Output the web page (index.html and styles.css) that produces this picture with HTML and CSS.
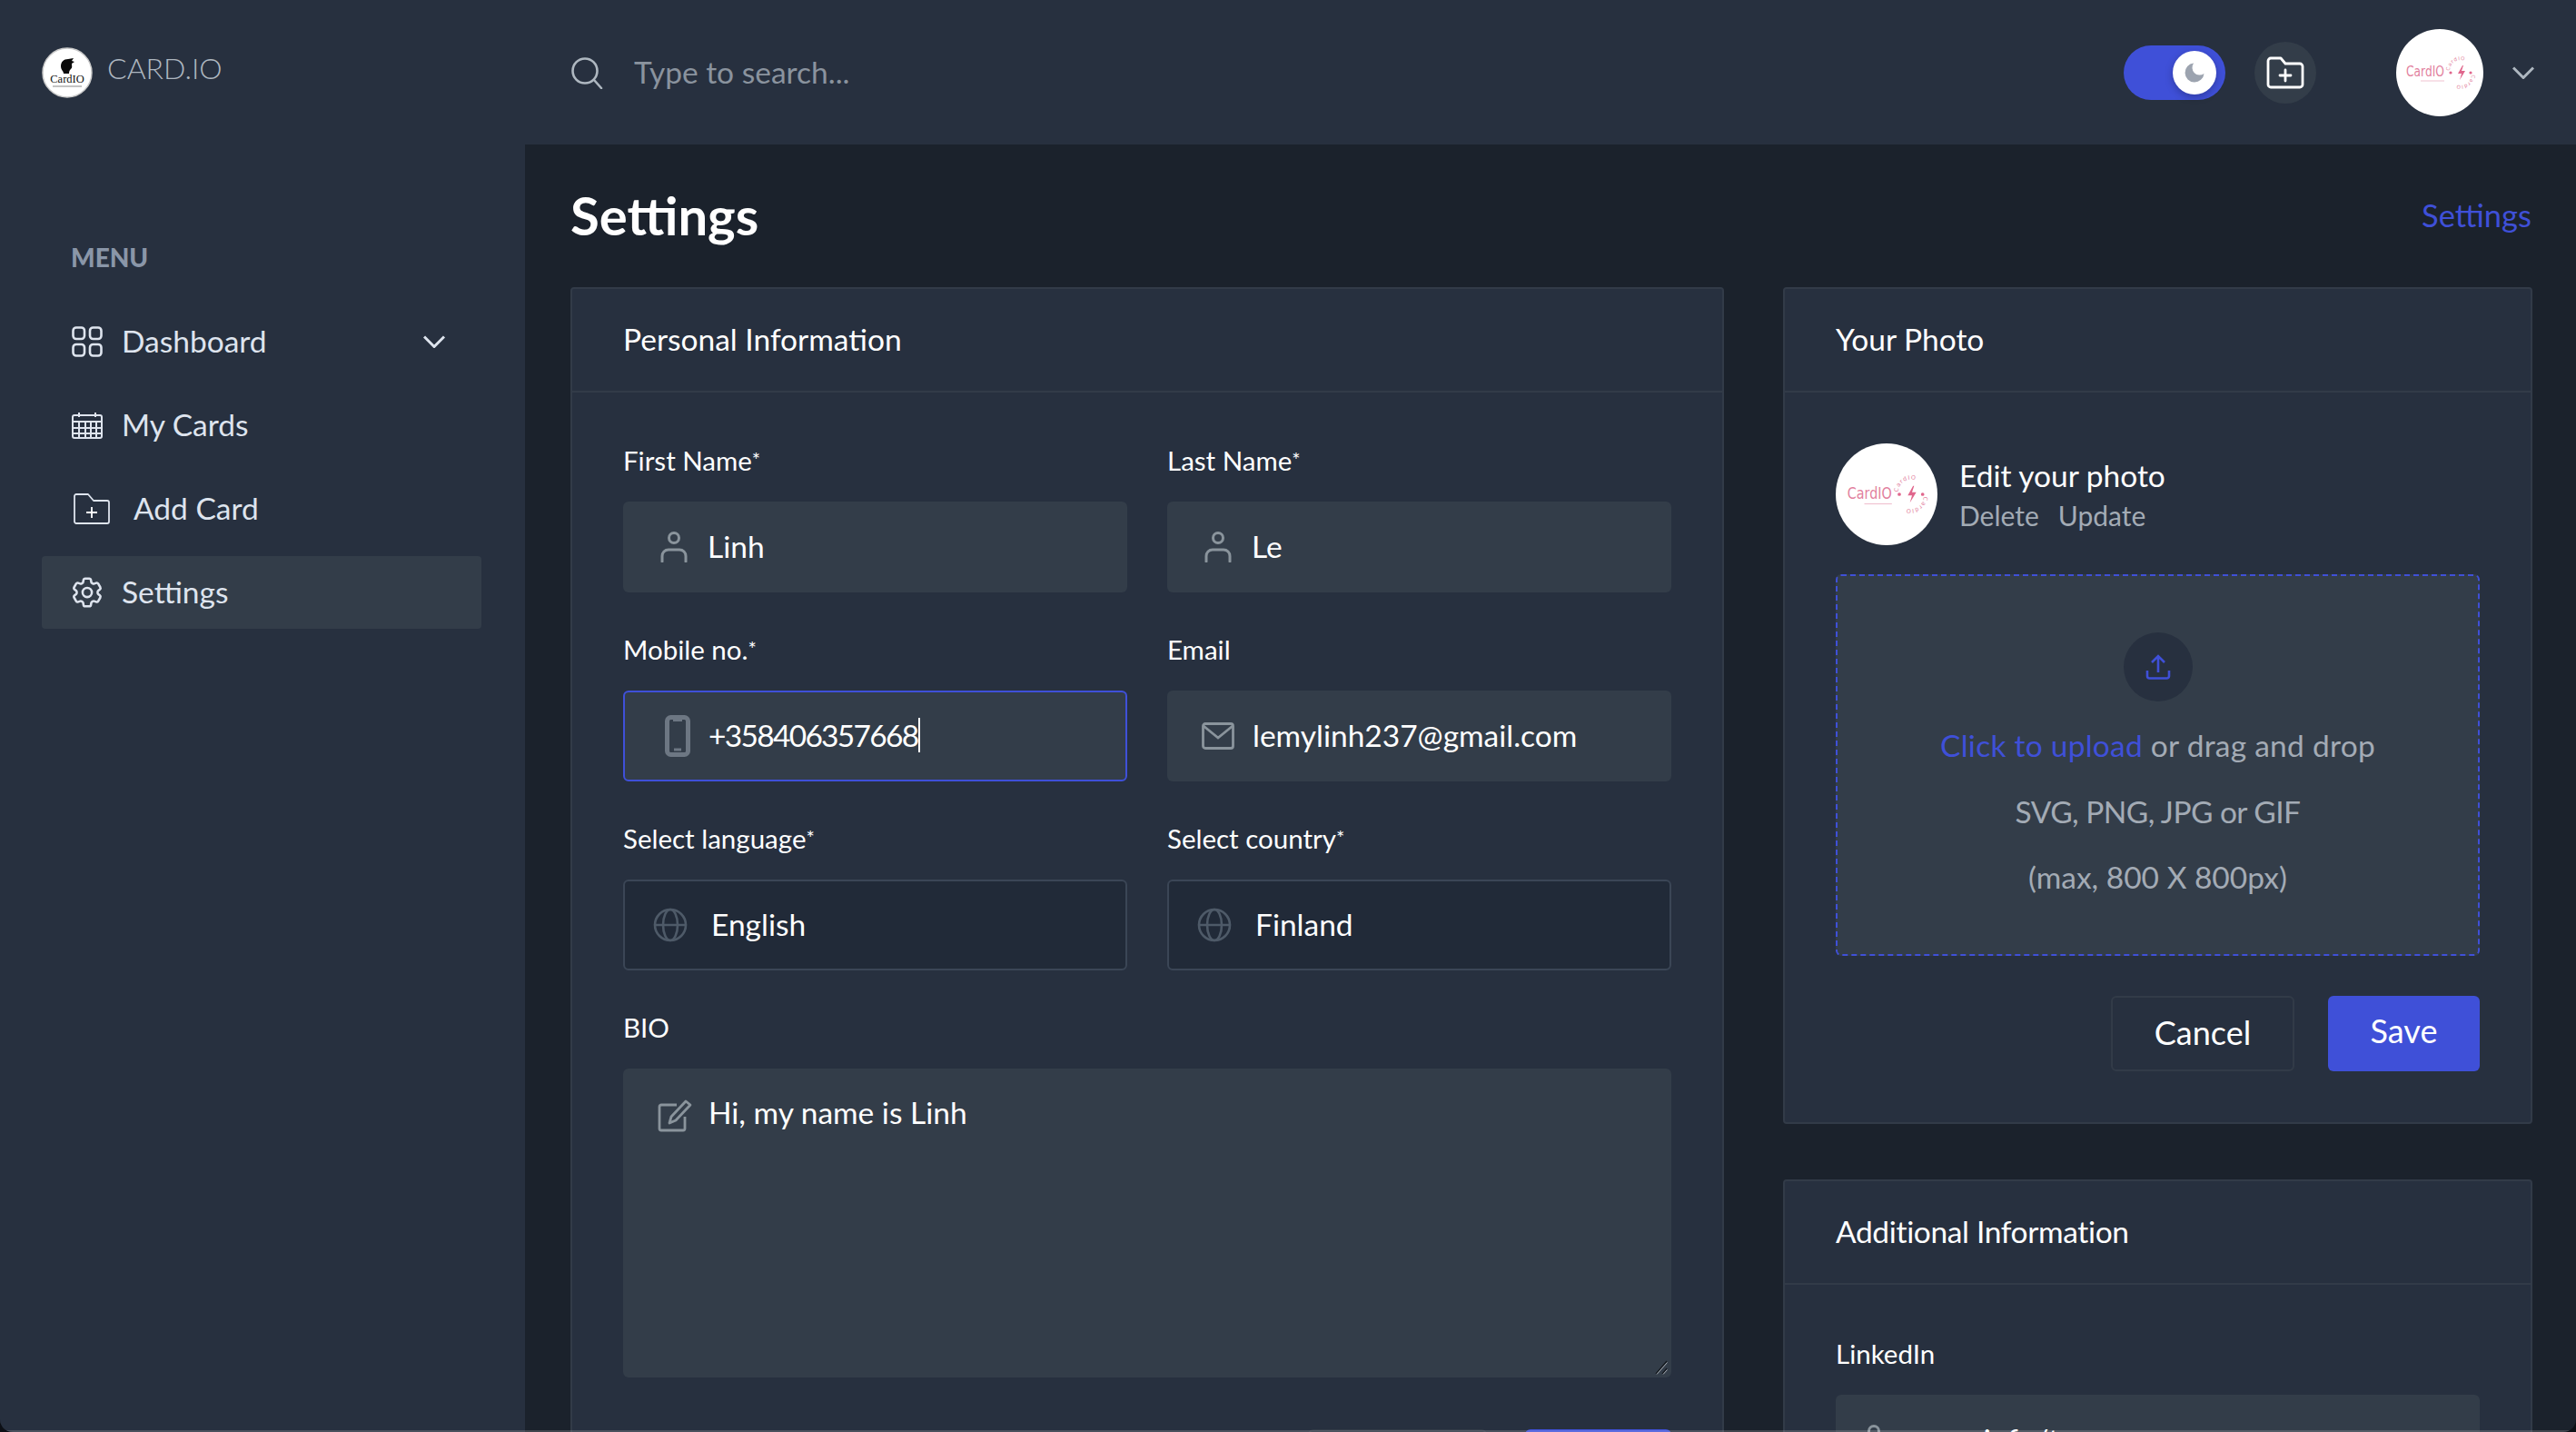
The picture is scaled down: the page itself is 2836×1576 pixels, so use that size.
FILE: index.html
```html
<!DOCTYPE html>
<html>
<head>
  <meta charset="utf-8">
  <title>Settings - Card.io</title>
  <link rel="stylesheet" href="styles.css">
</head>
<body>
<svg class="defs" xmlns="http://www.w3.org/2000/svg">
  <symbol id="i-user" viewBox="0 0 30 34">
    <circle cx="15" cy="7" r="5.5" fill="none" stroke="currentColor" stroke-width="3"/>
    <path d="M2 33v-6c0-4 3-7 7-7h12c4 0 7 3 7 7v6" fill="none" stroke="currentColor" stroke-width="3" stroke-linecap="round"/>
  </symbol>
  <symbol id="i-globe" viewBox="0 0 38 38">
    <g fill="none" stroke="currentColor" stroke-width="2.6">
      <circle cx="19" cy="19" r="17"/>
      <ellipse cx="19" cy="19" rx="8" ry="17"/>
      <path d="M2 19h34"/>
    </g>
  </symbol>
</svg>

<div class="app">
  <header class="topbar">
    <div class="brand">
      <svg class="brand-logo" viewBox="0 0 56 56">
        <circle cx="28" cy="28" r="27" fill="#fff" stroke="#c9c9c9" stroke-width="1.500"/>
        <path d="M21 21c0-5 3-8 8-8l6-1-2 3 3 1-3 2c0 3 1 4-1 6-1 1-2 2-2 5h-6c0-3-3-4-3-8z" fill="#0b0b0b"/>
        <text x="28" y="39" text-anchor="middle" font-family="Liberation Serif" font-size="12.500" fill="#111">CardIO</text>
        <path d="M12 43h32" stroke="#888" stroke-width="1"/>
      </svg>
      <span class="brand-name">CARD.IO</span>
    </div>
    <div class="search">
      <svg width="36" height="36" viewBox="0 0 36 36" fill="none" stroke="#aeb7c0" stroke-width="2.6" stroke-linecap="round"><circle cx="16" cy="16" r="13.5"/><path d="M26 26l8 9"/></svg>
      <span>Type to search...</span>
    </div>
    <div class="top-actions">
      <div class="toggle">
        <div class="toggle-knob">
          <svg width="28" height="28" viewBox="0 0 24 24"><path d="M21 12.79A9 9 0 1 1 11.21 3 7 7 0 0 0 21 12.79z" fill="#9ca3af"/></svg>
        </div>
      </div>
      <div class="add-btn">
        <svg width="42" height="36" viewBox="0 0 42 36" fill="none" stroke="#fff" stroke-width="2.8" stroke-linecap="round" stroke-linejoin="round"><path d="M2 5a3 3 0 0 1 3-3h11l5 6h16a3 3 0 0 1 3 3v20a3 3 0 0 1-3 3H5a3 3 0 0 1-3-3z"/><path d="M21 15v12M15 21h12"/></svg>
      </div>
      <svg class="top-avatar" viewBox="0 0 96 96">
        <circle cx="48" cy="48" r="48" fill="#fff"/>
        <path id="ring-a1" d="M59 46a12 12 0 0 1 24 0" fill="none"/>
        <path id="ring-a2" d="M83 50a12 12 0 0 1-24 0" fill="none"/>
        <text x="11" y="52" font-family="DejaVu Sans" font-size="15" fill="#e27f9e" textLength="42" lengthAdjust="spacingAndGlyphs">CardIO</text>
        <text class="ring-text" font-family="DejaVu Sans" font-size="5.500" fill="#e27f9e"><textPath href="#ring-a1">CardIO</textPath></text>
        <text class="ring-text" font-family="DejaVu Sans" font-size="5.500" fill="#e27f9e"><textPath href="#ring-a2">CardIO</textPath></text>
        <path d="M73 40l-5 9h4l-2 7 6-10h-4l2-6z" fill="#e0668c"/>
        <circle cx="60" cy="48" r="1.600" fill="#e0668c"/>
        <circle cx="82" cy="48" r="1.600" fill="#e0668c"/>
        <path d="M27 57h26" stroke="#f0c2d1" stroke-width="1"/>
      </svg>
      <svg width="24" height="14" viewBox="0 0 24 14" fill="none" stroke="#aeb7c0" stroke-width="3"><path d="M1 1.5l11 11 11-11"/></svg>
    </div>
  </header>

  <aside class="sidebar">
    <h3 class="menu-title">MENU</h3>
    <nav class="menu">
      <a class="menu-item">
        <svg width="34" height="34" viewBox="0 0 34 34" fill="none" stroke="currentColor" stroke-width="2.6"><rect x="1.5" y="1.5" width="12.5" height="12.5" rx="3.5"/><rect x="20" y="1.5" width="12.5" height="12.5" rx="3.5"/><rect x="1.5" y="20" width="12.5" height="12.5" rx="3.5"/><rect x="20" y="20" width="12.5" height="12.5" rx="3.5"/></svg>
        <span>Dashboard</span>
        <svg class="menu-arrow" width="24" height="14" viewBox="0 0 24 14" fill="none" stroke="currentColor" stroke-width="3"><path d="M1 1.5l11 11 11-11"/></svg>
      </a>
      <a class="menu-item">
        <svg width="34" height="30" viewBox="0 0 34 30" fill="none" stroke="currentColor" stroke-width="2"><rect x="1" y="4" width="32" height="25" rx="2"/><path d="M1 11h32M1 18h32M1 24h32M8 11v18M15 11v18M21 11v18M27 11v18M8 1v5M26 1v5"/></svg>
        <span>My Cards</span>
      </a>
      <a class="menu-item menu-item-add">
        <svg width="40" height="34" viewBox="0 0 40 34" fill="none" stroke="currentColor" stroke-width="1.8" stroke-linejoin="round"><path d="M1 3a2 2 0 0 1 2-2h13l6 7h15a2 2 0 0 1 2 2v21a2 2 0 0 1-2 2H3a2 2 0 0 1-2-2z"/><path d="M20 15v12M14 21h12" stroke="#fff"/></svg>
        <span>Add Card</span>
      </a>
      <a class="menu-item active">
        <svg width="34" height="34" viewBox="2 2 20 20" fill="none" stroke="currentColor" stroke-width="1.5"><path d="M9.594 3.94c.09-.542.56-.94 1.11-.94h2.593c.55 0 1.02.398 1.11.94l.213 1.281c.063.374.313.686.645.87.074.04.147.083.22.127.325.196.72.257 1.075.124l1.217-.456a1.125 1.125 0 0 1 1.37.49l1.296 2.247a1.125 1.125 0 0 1-.26 1.431l-1.003.827c-.293.241-.438.613-.43.992a7.723 7.723 0 0 1 0 .255c-.008.378.137.75.43.991l1.004.827c.424.35.534.955.26 1.43l-1.298 2.247a1.125 1.125 0 0 1-1.369.491l-1.217-.456c-.355-.133-.75-.072-1.076.124a6.47 6.47 0 0 1-.22.128c-.331.183-.581.495-.644.869l-.213 1.281c-.09.543-.56.94-1.11.94h-2.594c-.55 0-1.019-.398-1.11-.94l-.213-1.281c-.062-.374-.312-.686-.644-.87a6.52 6.52 0 0 1-.22-.127c-.325-.196-.72-.257-1.076-.124l-1.217.456a1.125 1.125 0 0 1-1.369-.49l-1.297-2.247a1.125 1.125 0 0 1 .26-1.431l1.004-.827c.292-.24.437-.613.43-.991a6.932 6.932 0 0 1 0-.255c.007-.38-.138-.751-.43-.992l-1.004-.827a1.125 1.125 0 0 1-.26-1.43l1.297-2.247a1.125 1.125 0 0 1 1.37-.491l1.216.456c.356.133.751.072 1.076-.124.072-.044.146-.086.22-.128.332-.183.582-.495.644-.869l.214-1.28Z"/><circle cx="12" cy="12" r="3"/></svg>
        <span>Settings</span>
      </a>
    </nav>
  </aside>

  <main class="content">
    <div class="page-head">
      <h2 class="page-title">Settings</h2>
      <a class="crumb">Settings</a>
    </div>
    <div class="columns">
      <section class="card">
        <div class="card-head"><span>Personal Information</span></div>
        <div class="form-body">
          <div class="form-grid">
            <div class="form-group">
              <label>First Name<sup>*</sup></label>
              <div class="field">
                <svg class="field-icon" width="30" height="34"><use href="#i-user"/></svg>
                <span>Linh</span>
              </div>
            </div>
            <div class="form-group">
              <label>Last Name<sup>*</sup></label>
              <div class="field">
                <svg class="field-icon" width="30" height="34"><use href="#i-user"/></svg>
                <span>Le</span>
              </div>
            </div>
            <div class="form-group">
              <label>Mobile no.<sup>*</sup></label>
              <div class="field focused">
                <svg class="field-icon icon-phone" width="28" height="46" viewBox="0 0 28 46" fill="none"><rect x="2.5" y="2.5" width="23" height="41" rx="4" stroke="#6d7783" stroke-width="5"/><path d="M10 38h8" stroke="#6d7783" stroke-width="3"/><path d="M9 4h10v3H9z" fill="#6d7783"/></svg>
                <span class="caret">+358406357668</span>
              </div>
            </div>
            <div class="form-group">
              <label>Email</label>
              <div class="field">
                <svg class="field-icon icon-mail" width="36" height="30" viewBox="0 0 36 30" fill="none" stroke="currentColor" stroke-width="2.8"><rect x="1.5" y="1.5" width="33" height="27" rx="2.5"/><path d="M2 4l16 13L34 4"/></svg>
                <span>lemylinh237@gmail.com</span>
              </div>
            </div>
            <div class="form-group">
              <label>Select language<sup>*</sup></label>
              <div class="field select">
                <svg class="field-icon" width="38" height="38"><use href="#i-globe"/></svg>
                <span>English</span>
              </div>
            </div>
            <div class="form-group">
              <label>Select country<sup>*</sup></label>
              <div class="field select">
                <svg class="field-icon" width="38" height="38"><use href="#i-globe"/></svg>
                <span>Finland</span>
              </div>
            </div>
            <div class="form-group form-wide">
              <label>BIO</label>
              <div class="field textarea">
                <svg class="field-icon" width="38" height="36" viewBox="0 0 38 36" fill="none" stroke="currentColor" stroke-width="2.8" stroke-linejoin="round"><path d="M21 6H4a2 2 0 0 0-2 2v24a2 2 0 0 0 2 2h24a2 2 0 0 0 2-2V19"/><path d="M31 2l5 4-16 17-7 3 2-7z"/></svg>
                <span>Hi, my name is Linh</span>
                <svg class="resize-grip" width="14" height="16" viewBox="0 0 14 16" fill="none"><path d="M1 15L13 1M8 15l5-6" stroke="#14181e" stroke-width="1.2"/><path d="M2 15.500L13.500 2.500M9 15.500l4.500-5" stroke="#c9ced4" stroke-width=".8"/></svg>
              </div>
            </div>
          </div>
          <div class="form-actions">
            <button class="btn btn-outline form-btn-cancel">Cancel</button>
            <button class="btn btn-primary form-btn-save">Save</button>
          </div>
        </div>
      </section>

      <div class="side-col">
        <section class="card">
          <div class="card-head"><span>Your Photo</span></div>
          <div class="photo-body">
            <div class="photo-row">
              <svg class="photo-avatar" viewBox="0 0 96 96">
                <circle cx="48" cy="48" r="48" fill="#fff"/>
                <path id="ring-b1" d="M59 46a12 12 0 0 1 24 0" fill="none"/>
                <path id="ring-b2" d="M83 50a12 12 0 0 1-24 0" fill="none"/>
                <text x="11" y="52" font-family="DejaVu Sans" font-size="15" fill="#e27f9e" textLength="42" lengthAdjust="spacingAndGlyphs">CardIO</text>
                <text class="ring-text" font-family="DejaVu Sans" font-size="5.500" fill="#e27f9e"><textPath href="#ring-b1">CardIO</textPath></text>
                <text class="ring-text" font-family="DejaVu Sans" font-size="5.500" fill="#e27f9e"><textPath href="#ring-b2">CardIO</textPath></text>
                <path d="M73 40l-5 9h4l-2 7 6-10h-4l2-6z" fill="#e0668c"/>
                <circle cx="60" cy="48" r="1.600" fill="#e0668c"/>
                <circle cx="82" cy="48" r="1.600" fill="#e0668c"/>
                <path d="M27 57h26" stroke="#f0c2d1" stroke-width="1"/>
              </svg>
              <div>
                <div class="photo-title">Edit your photo</div>
                <div class="photo-links"><a>Delete</a><a>Update</a></div>
              </div>
            </div>
            <div class="dropzone">
              <div class="upload-circle">
                <svg width="28" height="28" viewBox="0 0 28 28" fill="none" stroke="#3f50d8" stroke-width="2.6"><path d="M14 20V2M7 9l7-7 7 7M2 18v6a2.500 2.500 0 0 0 2.500 2.500h19A2.500 2.500 0 0 0 26 24v-6"/></svg>
              </div>
              <p class="drop-line1"><span class="link">Click to upload</span> or drag and drop</p>
              <p class="drop-line2">SVG, PNG, JPG or GIF</p>
              <p>(max, 800 X 800px)</p>
            </div>
            <div class="photo-actions">
              <button class="btn btn-outline">Cancel</button>
              <button class="btn btn-primary">Save</button>
            </div>
          </div>
        </section>

        <section class="card">
          <div class="card-head card-head-tight"><span>Additional Information</span></div>
          <div class="photo-body">
            <label>LinkedIn</label>
            <div class="field">
              <svg class="field-icon icon-link" width="30" height="34"><use href="#i-user"/></svg>
              <span>user.info/t</span>
            </div>
          </div>
        </section>
      </div>
    </div>
  </main>
  <div class="window-edge"></div>
</div>
</body>
</html>
```

FILE: styles.css
```css
* { box-sizing: border-box; }
html, body { margin: 0; height: 100%; background: #0d1016; }
body { font-family: "Lato", "Liberation Sans", sans-serif; color: #fff; font-size: 33.5px; }
.defs { display: block; width: 0; height: 0; }
a { color: inherit; text-decoration: none; }
svg { display: block; flex: none; }
.ring-text { letter-spacing: .8px; }

.app {
  position: relative;
  display: grid;
  grid-template-columns: 578px 1fr;
  grid-template-rows: 159px 1fr;
  height: 1576px;
  overflow: hidden;
  border-radius: 0 0 14px 14px;
  background: #1b222c;
}
.window-edge {
  position: absolute;
  left: 0;
  right: 0;
  bottom: 0;
  height: 2px;
  background: rgba(255, 255, 255, .16);
}

/* top bar */
.topbar {
  grid-column: 1 / 3;
  display: flex;
  align-items: center;
  background: #27303f;
}
.brand {
  display: flex;
  align-items: center;
  width: 628px;
  padding-left: 46px;
  gap: 16px;
}
.brand-logo { width: 56px; height: 56px; }
.brand-name { font-size: 32px; color: #aeb7c0; margin-bottom: 10px; font-weight: 300; }
.search { display: flex; align-items: center; gap: 34px; color: #8a939e; }
.search span { margin-bottom: 2px; }
.top-actions { display: flex; align-items: center; margin-left: auto; padding-right: 46px; }
.toggle {
  display: flex;
  align-items: center;
  justify-content: flex-end;
  width: 112px;
  height: 60px;
  padding-right: 10px;
  border-radius: 30px;
  background: #3f50d8;
}
.toggle-knob {
  display: flex;
  align-items: center;
  justify-content: center;
  width: 48px;
  height: 48px;
  border-radius: 50%;
  background: #fff;
  box-shadow: 0 3px 8px rgba(0, 0, 0, .25);
}
.add-btn {
  display: flex;
  align-items: center;
  justify-content: center;
  width: 68px;
  height: 68px;
  margin-left: 32px;
  border-radius: 50%;
  background: #333d49;
}
.top-avatar { width: 96px; height: 96px; margin: 0 32px 0 88px; }

/* sidebar */
.sidebar { background: #27303f; padding: 107px 48px 0 46px; }
.menu-title {
  margin: 0 0 36px 32px;
  font-size: 28px;
  line-height: 34px;
  font-weight: 900;
  color: #8a96a8;
}
.menu { display: flex; flex-direction: column; gap: 12px; }
.menu-item {
  display: flex;
  align-items: center;
  gap: 21px;
  height: 80px;
  padding: 0 40px 0 33px;
  border-radius: 4px;
  color: #dee4ee;
}
.menu-item span { margin-bottom: 2px; }
.menu-item-add { gap: 26px; padding-left: 35px; }
.menu-item.active { background: #333d49; }
.menu-arrow { margin-left: auto; }

/* page */
.content { padding: 0 49px 0 50px; min-width: 0; }
.page-head { display: flex; align-items: center; justify-content: space-between; height: 157px; }
.page-title { margin: 0 0 2px; font-size: 58px; font-weight: 700; }
.crumb { color: #3f50d8; font-size: 34.5px; margin-bottom: 2px; }
.columns { display: grid; grid-template-columns: 1270px 825px; gap: 65px; align-items: start; }
.side-col { display: flex; flex-direction: column; gap: 61px; }
.card { background: #27303f; border: 2px solid #323b48; border-radius: 4px; }
.card-head {
  display: flex;
  align-items: center;
  height: 114px;
  padding-left: 56px;
  border-bottom: 2px solid #323b48;
}
.card-head span { margin-bottom: 2px; }
.card-head-tight { letter-spacing: -.35px; }

/* form */
.form-body { padding: 55px 56px 40px; }
.form-grid { display: grid; grid-template-columns: 555px 555px; column-gap: 44px; row-gap: 43px; }
.form-wide { grid-column: 1 / 3; }
label { display: block; margin-bottom: 25px; font-size: 29.5px; line-height: 40px; }
sup { font-size: 22px; line-height: 0; vertical-align: 4px; }
.field {
  display: flex;
  align-items: center;
  height: 100px;
  padding-left: 41px;
  border-radius: 6px;
  background: #333d49;
  color: #fff;
}
.field span { margin-bottom: 2px; }
.field-icon { color: #8a949c; margin-right: 22px; }
.field .icon-phone { margin-left: 5px; margin-right: 20px; }
.field .icon-mail { margin-left: -3px; margin-right: 20px; }
.field .icon-link { margin-left: -14px; margin-right: 36px; }
.field.focused { border: 2px solid #3f50d8; padding-left: 39px; }
.field.select {
  padding-left: 31px;
  background: #212a38;
  border: 2px solid #3b4656;
}
.field.select .field-icon { color: #4e5a68; margin-right: 26px; }
.field.textarea {
  position: relative;
  align-items: flex-start;
  height: 340px;
  padding-top: 28px;
}
.field.textarea span { line-height: 40px; }
.field.textarea .field-icon { margin: 6px 18px 0 -3px; }
.field .caret { border-right: 2px solid #fff; line-height: 38px; letter-spacing: -1.7px; }
.resize-grip { position: absolute; right: 4px; bottom: 3px; }
.form-actions { display: flex; justify-content: flex-end; gap: 42px; margin-top: 57px; }

/* buttons */
.btn {
  height: 83px;
  padding: 0 0 3px;
  border-radius: 6px;
  font-family: inherit;
  font-size: 36px;
  color: #fff;
}
.btn-outline { width: 202px; background: transparent; border: 2px solid #323b48; }
.btn-primary { width: 167px; padding-bottom: 7px; background: #3f50d8; border: 0; }
.form-btn-cancel { width: 197px; }
.form-btn-save { width: 161px; }

/* photo */
.photo-body { padding: 56px; }
.photo-row { display: flex; align-items: center; gap: 24px; margin-bottom: 32px; }
.photo-avatar { width: 112px; height: 112px; }
.photo-title { line-height: 44px; margin-bottom: 2px; }
.photo-links { display: flex; gap: 21px; margin-top: 1px; font-size: 30px; line-height: 40px; color: #a3abb5; }
.dropzone {
  height: 420px;
  padding-top: 62px;
  border: 2px dashed #3f50d8;
  border-radius: 6px;
  background: #333d49;
  text-align: center;
  color: #a3abb5;
}
.dropzone p { margin: 0; line-height: 72.500px; }
.dropzone .drop-line1 { letter-spacing: .25px; }
.dropzone .drop-line2 { letter-spacing: -.55px; }
.upload-circle {
  display: flex;
  align-items: center;
  justify-content: center;
  width: 76px;
  height: 76px;
  margin: 0 auto 12px;
  border-radius: 50%;
  background: #27303f;
}
.link { color: #3f50d8; }
.photo-actions { display: flex; justify-content: flex-end; gap: 37px; margin-top: 44px; }
```
